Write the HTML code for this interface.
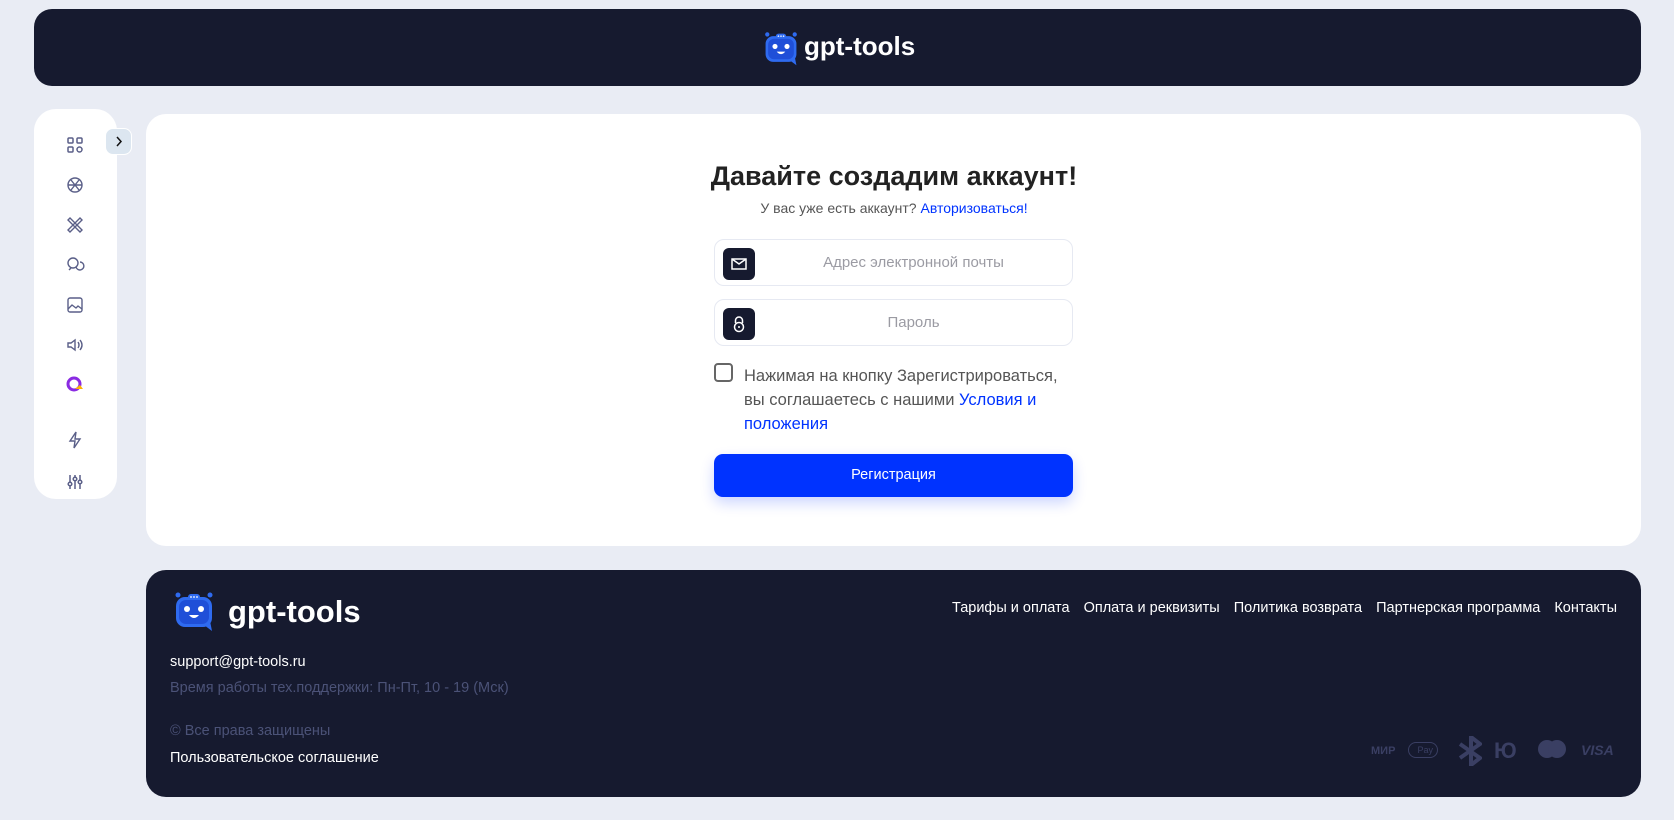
<!DOCTYPE html>
<html><head><meta charset="utf-8"><style>
*{box-sizing:border-box;margin:0;padding:0}
body{width:1674px;height:820px;background:#e9ecf4;font-family:"Liberation Sans",sans-serif;position:relative;overflow:hidden}
.abs{position:absolute}
.hdr{left:34px;top:9px;width:1607px;height:77px;background:#161a2f;border-radius:18px}
.side{left:34px;top:109px;width:83px;height:390px;background:#fff;border-radius:22px}
.tog{left:105px;top:128px;width:27px;height:27px;background:#dce6f0;border:1px solid #fff;border-radius:8px}
.main{left:146px;top:114px;width:1495px;height:432px;background:#fff;border-radius:20px}
.foot{left:146px;top:570px;width:1495px;height:227px;background:#161a2f;border-radius:20px}
.inp{left:714px;width:359px;height:47px;border:1px solid #e6e9f2;border-radius:10px;background:#fff}
.ib{position:absolute;left:8px;top:8px;width:32px;height:32px;background:#161a2f;border-radius:6px}
.ph{position:absolute;left:40px;right:0;top:0;line-height:45px;text-align:center;color:#9b9ba3;font-size:15px}
.ico{position:absolute;left:29px;width:24px;height:24px}
.links{right:24px;top:30px;display:flex;gap:14px;color:#fff;font-size:14.5px}
</style></head><body>
<svg width="0" height="0" style="position:absolute"><defs>
<g id="bot"><rect x="2" y="6" width="36" height="30" rx="9" fill="#2f6bf0"/><rect x="5" y="9" width="30" height="24" rx="7" fill="#1f4fd8"/><circle cx="4" cy="4" r="2.5" fill="#2f6bf0"/><circle cx="36" cy="4" r="2.5" fill="#2f6bf0"/><rect x="14" y="3" width="12" height="6" rx="3" fill="#2f6bf0"/><circle cx="17" cy="6" r=".9" fill="#fff"/><circle cx="20" cy="6" r=".9" fill="#fff"/><circle cx="23" cy="6" r=".9" fill="#fff"/><path d="M30 34 L38 40 L36 30Z" fill="#2f6bf0"/><circle cx="13" cy="18" r="3" fill="#fff"/><circle cx="27" cy="18" r="3" fill="#fff"/><path d="M15 24 Q20 30 25 24Z" fill="#fff"/></g>
</defs></svg>
<div class="abs hdr"><svg class="abs" style="left:729px;top:22px" width="36" height="36" viewBox="0 0 40 42"><use href="#bot"/></svg><div class="abs" style="left:770px;top:22px;color:#fff;font-weight:bold;font-size:26px">gpt-tools</div></div>
<div class="abs side">
<svg class="ico" style="top:24px" viewBox="0 0 24 24" fill="none" stroke="#5a5f88" stroke-width="1.5"><rect x="5" y="5" width="5" height="5" rx="1"/><rect x="14" y="5" width="5" height="5" rx="1"/><rect x="5" y="14" width="5" height="5" rx="1"/><circle cx="16.5" cy="16.5" r="2.5"/></svg>
<svg class="ico" style="top:64px" viewBox="0 0 24 24" fill="none" stroke="#5a5f88" stroke-width="1.4"><circle cx="12" cy="12" r="7"/><path d="M8 7l8 10M16 7l-8 10M5 12h14"/></svg>
<svg class="ico" style="top:104px" viewBox="0 0 24 24" fill="none" stroke="#5a5f88" stroke-width="1.4"><path d="M5 7l2-2 12 12-2 2zM17 5l2 2L7 19l-2-2z"/></svg>
<svg class="ico" style="top:144px" viewBox="0 0 24 24" fill="none" stroke="#5a5f88" stroke-width="1.4"><circle cx="10" cy="10" r="5"/><path d="M13 14a4 4 0 1 0 4-5M8 15l-2 2"/></svg>
<svg class="ico" style="top:184px" viewBox="0 0 24 24" fill="none" stroke="#5a5f88" stroke-width="1.4"><rect x="5" y="5" width="14" height="14" rx="2"/><path d="M5 16l4-4 4 3 2-2 4 3"/></svg>
<svg class="ico" style="top:224px" viewBox="0 0 24 24" fill="none" stroke="#5a5f88" stroke-width="1.4"><path d="M5 10h3l4-3v10l-4-3H5z"/><path d="M15 9q2 3 0 6M17 7q4 5 0 10"/></svg>
<svg class="ico" style="top:264px" viewBox="0 0 24 24"><circle cx="11" cy="11" r="6" fill="none" stroke="#8a2be2" stroke-width="3"/><path d="M12 16h8l-3-4z" fill="#ffb400"/></svg>
<svg class="ico" style="top:319px" viewBox="0 0 24 24" fill="none" stroke="#5a5f88" stroke-width="1.4"><path d="M13 4L7 13h5l-1 7 6-9h-5z"/></svg>
<svg class="ico" style="top:361px" viewBox="0 0 24 24" fill="none" stroke="#5a5f88" stroke-width="1.5"><path d="M7 5v14M12 5v14M17 5v14"/><circle cx="7" cy="14" r="1.8" fill="#fff"/><circle cx="12" cy="9" r="1.8" fill="#fff"/><circle cx="17" cy="12" r="1.8" fill="#fff"/></svg>
</div>
<div class="abs tog"><svg width="25" height="25" viewBox="0 0 25 25"><path d="M11 8l4 4.5-4 4.5" fill="none" stroke="#111" stroke-width="1.5"/></svg></div>
<div class="abs main"></div>
<div class="abs" style="left:646px;width:496px;top:161px;text-align:center;font-size:27px;font-weight:bold;color:#222">Давайте создадим аккаунт!</div>
<div class="abs" style="left:646px;width:496px;top:200px;text-align:center;font-size:14px;color:#555">У вас уже есть аккаунт? <span style="color:#0033ff">Авторизоваться!</span></div>
<div class="abs inp" style="top:239px"><div class="ib"><svg width="32" height="32" viewBox="0 0 32 32" fill="none" stroke="#fff" stroke-width="1.5"><rect x="9" y="11" width="14" height="10"/><path d="M9 11l7 5 7-5"/></svg></div><div class="ph">Адрес электронной почты</div></div>
<div class="abs inp" style="top:299px"><div class="ib"><svg width="32" height="32" viewBox="0 0 32 32" fill="none" stroke="#fff" stroke-width="1.5"><path d="M12.5 15v-2.5a3.5 3.5 0 0 1 7 0V15"/><circle cx="16" cy="19" r="4.5"/><path d="M16 18v2"/></svg></div><div class="ph">Пароль</div></div>
<div class="abs" style="left:714px;top:363px;width:19px;height:19px;border:2px solid #666;border-radius:4px"></div>
<div class="abs" style="left:744px;top:364px;width:318px;font-size:16.5px;line-height:24px;color:#555">Нажимая на кнопку Зарегистрироваться, вы соглашаетесь с нашими <span style="color:#0033ff">Условия и положения</span></div>
<div class="abs" style="left:714px;top:454px;width:359px;height:43px;background:#0033ff;border-radius:9px;color:#fff;font-size:14.5px;text-align:center;line-height:43px;box-shadow:0 6px 14px rgba(0,51,255,.2)">Регистрация</div>
<div class="abs foot">
<svg class="abs" style="left:24px;top:21px" width="48" height="42" viewBox="0 0 40 42"><use href="#bot"/></svg>
<div class="abs" style="left:82px;top:24px;color:#fff;font-weight:bold;font-size:31px">gpt-tools</div>
<div class="abs links"><span>Тарифы и оплата</span><span>Оплата и реквизиты</span><span>Политика возврата</span><span>Партнерская программа</span><span>Контакты</span></div>
<div class="abs" style="left:24px;top:84px;color:#fff;font-size:14.5px">support@gpt-tools.ru</div>
<div class="abs" style="left:24px;top:110px;color:#4b5277;font-size:14.5px">Время работы тех.поддержки: Пн-Пт, 10 - 19 (Мск)</div>
<div class="abs" style="left:24px;top:153px;color:#4b5277;font-size:14.5px">© Все права защищены</div>
<div class="abs" style="left:24px;top:180px;color:#fff;font-size:14.5px">Пользовательское соглашение</div>
<div class="abs" style="left:1225px;top:175px;color:#3a3f63;font-weight:bold;font-size:11px">МИР</div>
<div class="abs" style="left:1262px;top:172px;width:30px;height:16px;border:1px solid #3a3f63;border-radius:8px;color:#3a3f63;font-size:9px;line-height:14px;text-align:right;padding-right:4px">Pay</div>
<svg class="abs" style="left:1312px;top:166px" width="24" height="30" viewBox="0 0 24 30"><path d="M2 8l20 14-9 7V1l9 7L2 22" fill="none" stroke="#3a3f63" stroke-width="4"/></svg>
<div class="abs" style="left:1348px;top:168px;color:#3a3f63;font-weight:bold;font-size:22px;letter-spacing:-3px">Ю</div>
<svg class="abs" style="left:1392px;top:170px" width="28" height="18"><circle cx="9" cy="9" r="9" fill="#3a3f63"/><circle cx="19" cy="9" r="9" fill="#3a3f63"/></svg>
<div class="abs" style="left:1435px;top:172px;color:#3a3f63;font-weight:bold;font-style:italic;font-size:14px">VISA</div>
</div>
</body></html>
